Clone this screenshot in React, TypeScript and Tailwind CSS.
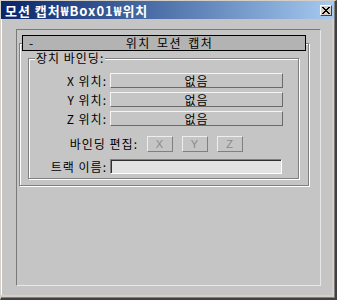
const etched = 'border border-[#808080] shadow-[inset_1px_1px_0_#ffffff,1px_1px_0_#ffffff]';

function FieldButton({ children }: { children: string }) {
  return (
    <div className="h-[15px] flex items-center justify-center bg-[#c5c5c5] border-t border-l border-t-[#f4f4f4] border-l-[#f4f4f4] border-b border-r border-b-[#6a6a6a] border-r-[#6a6a6a] text-[12px] leading-none tracking-[1px] text-black">
      {children}
    </div>
  );
}

function AxisButton({ children }: { children: string }) {
  return (
    <div className="w-[26px] h-[16px] flex items-center justify-center border-t border-l border-t-[#eeeeee] border-l-[#eeeeee] border-b border-r border-b-[#808080] border-r-[#808080] text-[11px] leading-none text-[#8a8a8a] font-['Liberation_Sans',sans-serif]">
      {children}
    </div>
  );
}

export default function App() {
  const rows = ['X 위치:', 'Y 위치:', 'Z 위치:'];

  return (
    <div className="w-[337px] h-[300px] bg-[#d4d0c8] border-l border-t border-[#d4d0c8] border-r-2 border-b-2 border-r-[#404040] border-b-[#404040] font-['Noto_Sans_CJK_KR','Noto_Sans',sans-serif] text-black">
      <div className="h-full flex flex-col border-r border-b border-[#808080]">
        {/* Title bar */}
        <div className="h-[18px] flex items-center justify-between bg-gradient-to-r from-[#0a246a] to-[#a6caf0] pl-[4px] pr-[2px]">
          <span className="text-white font-bold text-[13px] leading-none tracking-[1px]">모션 캡처₩Box01₩위치</span>
          <div className="w-[12px] h-[11px] bg-[#d4d0c8] border-t border-l border-white border-b border-r border-b-[#404040] border-r-[#404040] flex items-center justify-center">
            <svg width="8" height="7" viewBox="0 0 8 7" shapeRendering="crispEdges">
              <path d="M0 0h2v1H0zM6 0h2v1H6zM1 1h2v1H1zM5 1h2v1H5zM2 2h4v1H2zM3 3h2v1H3zM2 4h4v1H2zM1 5h2v1H1zM5 5h2v1H5zM0 6h2v1H0zM6 6h2v1H6z" fill="#000" />
            </svg>
          </div>
        </div>

        {/* Client area */}
        <div className="flex-1 pr-[2px] pb-[2px]">
          <div className="h-full bg-[#c5c5c5] border-l border-white pt-[10px] pl-[14px]">
            <div className="w-[305px] h-[257px] border-t border-l border-[#7a7a7a] border-b border-r border-b-[#e8e8e8] border-r-[#e8e8e8] pl-[2px] pt-[5px]">
              {/* Rollout header */}
              <div className="relative z-10 ml-[3px] w-[284px] h-[16px] border border-black bg-[#b3b3b3] flex items-center text-[12px] leading-none">
                <span className="w-[11px] pl-[6px]">-</span>
                <span className="flex-1 text-center tracking-[1.5px] [word-spacing:2px]">위치 모션 캡처</span>
              </div>

              {/* Rollout body */}
              <div className={`-mt-[8px] w-[290px] h-[143px] pl-[8px] pt-[14px] ${etched}`}>
                <div className={`relative w-[271px] h-[121px] ${etched}`}>
                  <span className="absolute left-[6px] -top-[8px] px-[1px] bg-[#c5c5c5] text-[12px] leading-[14px] tracking-[1px]">
                    장치 바인딩:
                  </span>

                  <div className="grid grid-cols-[78px_173px] gap-x-[3px] gap-y-[4px] pt-[14px] text-[12px] tracking-[1px]">
                    {rows.map((label) => (
                      <div key={label} className="contents">
                        <span className="h-[15px] flex items-center justify-end leading-none">{label}</span>
                        <FieldButton>없음</FieldButton>
                      </div>
                    ))}
                  </div>

                  <div className="mt-[10px] h-[16px] flex items-center text-[12px] tracking-[1px]">
                    <span className="w-[109px] text-right leading-none">바인딩 편집:</span>
                    <div className="ml-[9px] flex gap-[9px]">
                      <AxisButton>X</AxisButton>
                      <AxisButton>Y</AxisButton>
                      <AxisButton>Z</AxisButton>
                    </div>
                  </div>

                  <div className="mt-[7px] grid grid-cols-[78px_172px] gap-x-[3px] text-[12px] tracking-[1px]">
                    <span className="h-[15px] flex items-center justify-end leading-none">트랙 이름:</span>
                    <div className="h-[15px] bg-[#e2e2e2] border-t border-l border-[#808080] border-b border-r border-b-white border-r-white shadow-[inset_1px_1px_0_#303030]" />
                  </div>
                </div>
              </div>
            </div>
          </div>
        </div>
      </div>
    </div>
  );
}
